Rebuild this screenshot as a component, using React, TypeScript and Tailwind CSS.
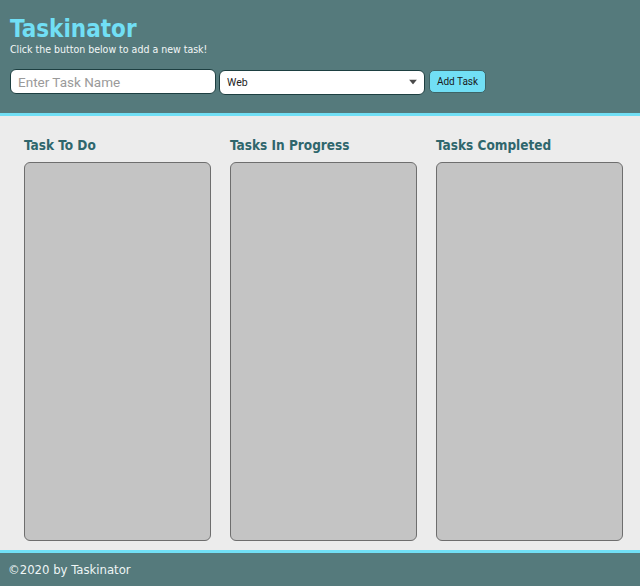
import { useState } from 'react';

const COLUMNS = ['Task To Do', 'Tasks In Progress', 'Tasks Completed'];

export default function App() {
  const [taskType, setTaskType] = useState('Web');

  return (
    <div className="h-[586px] flex flex-col bg-[#ececec]" style={{ fontFamily: '"DejaVu Sans Condensed", "DejaVu Sans", Tahoma, sans-serif' }}>
      {/* Header */}
      <header className="bg-[#557a7c] border-b-[3px] border-[#71dff5] px-[10px] pt-[15px] pb-[18px]">
        <h1 className="text-[24px] leading-[28px] font-bold text-[#71dff5]">Taskinator</h1>
        <p className="text-[10.5px] leading-[12px] text-[#f2f7f7]">Click the button below to add a new task!</p>

        <form className="mt-[13px] flex items-center gap-[3px]" onSubmit={(e) => e.preventDefault()}>
          <input
            type="text"
            placeholder="Enter Task Name"
            className="w-[206px] h-[25px] px-[7px] bg-white rounded-[6px] border border-[#1d3f41] text-[13.5px] text-gray-800 placeholder:text-[#9a9a9a] focus:outline-none"
            style={{ fontFamily: 'Roboto, "Liberation Sans", Arial, sans-serif' }}
          />
          <div className="relative mt-[1px]">
            <select
              value={taskType}
              onChange={(e) => setTaskType(e.target.value)}
              className="appearance-none w-[206px] h-[25px] pl-[7px] bg-white rounded-[6px] border border-[#1d3f41] text-[10.5px] text-[#222] focus:outline-none"
              style={{ fontFamily: 'Roboto, "Liberation Sans", Arial, sans-serif' }}
            >
              <option>Web</option>
              <option>Mobile</option>
              <option>Print</option>
            </select>
            <svg className="absolute right-[8px] top-1/2 -translate-y-1/2 pointer-events-none" width="8" height="5" viewBox="0 0 8 5">
              <path d="M0 0 H8 L4 5 Z" fill="#4a4a4a" />
            </svg>
          </div>
          <button
            type="submit"
            className="w-[57px] h-[23px] ml-[1px] rounded-[5px] bg-[#71dff5] border border-[#3d6466] text-[10px] text-[#1a1a1a]"
            style={{ fontFamily: 'Roboto, "Liberation Sans", Arial, sans-serif' }}
          >
            Add Task
          </button>
        </form>
      </header>

      {/* Columns */}
      <main className="flex-1 grid grid-cols-3 gap-[19px] pl-[24px] pr-[17px] pt-[21px]">
        {COLUMNS.map((title) => (
          <section key={title}>
            <h2 className="text-[13.5px] leading-[16px] font-bold text-[#2f666c] mb-[9px]">{title}</h2>
            <div className="h-[379px] bg-[#c4c4c4] border border-[#6e6e6e] rounded-[6px]"></div>
          </section>
        ))}
      </main>

      {/* Footer */}
      <footer className="h-[36px] bg-[#557a7c] border-t-[3px] border-[#71dff5] px-[8px] flex items-center">
        <p className="text-[13px] text-[#eef5f5]">©2020 by Taskinator</p>
      </footer>
    </div>
  );
}
